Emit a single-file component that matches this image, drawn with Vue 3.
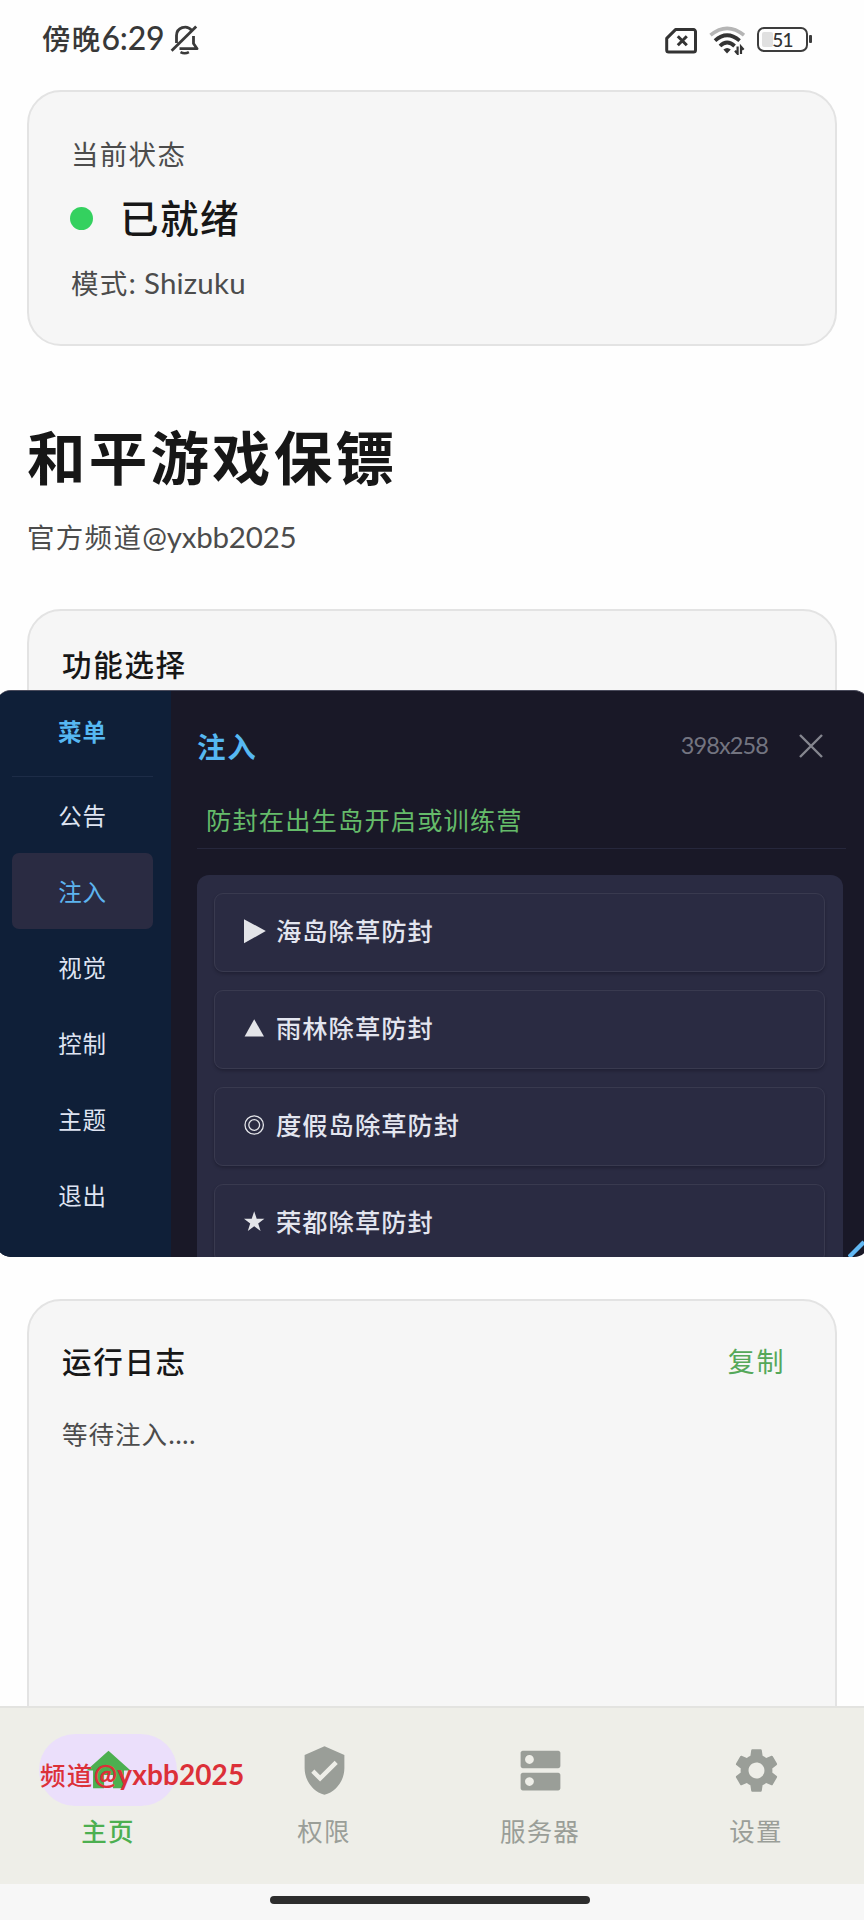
<script setup>
const menu = ['公告', '注入', '视觉', '控制', '主题', '退出']
const activeMenu = '注入'
const options = [
  { icon: 'play', label: '海岛除草防封' },
  { icon: 'triangle', label: '雨林除草防封' },
  { icon: 'rings', label: '度假岛除草防封' },
  { icon: 'star', label: '荣都除草防封' },
]
const tabs = [
  { label: '主页', active: true, path: 'M10 20v-6h4v6h5v-8h3L12 3 2 12h3v8z' },
  {
    label: '权限',
    path: 'M12 1L3 5v6c0 5.55 3.84 10.74 9 12 5.16-1.26 9-6.45 9-12V5l-9-4zm-2 16l-4-4 1.41-1.41L10 14.17l6.59-6.59L18 9l-8 8z',
  },
  {
    label: '服务器',
    path: 'M20 13H4c-.55 0-1 .45-1 1v6c0 .55.45 1 1 1h16c.55 0 1-.45 1-1v-6c0-.55-.45-1-1-1zM7 19c-1.1 0-2-.9-2-2s.9-2 2-2 2 .9 2 2-.9 2-2 2zM20 3H4c-.55 0-1 .45-1 1v6c0 .55.45 1 1 1h16c.55 0 1-.45 1-1V4c0-.55-.45-1-1-1zM7 9c-1.1 0-2-.9-2-2s.9-2 2-2 2 .9 2 2-.9 2-2 2z',
  },
  {
    label: '设置',
    path: 'M19.14 12.94c.04-.3.06-.61.06-.94 0-.32-.02-.64-.07-.94l2.03-1.58c.18-.14.23-.41.12-.61l-1.92-3.32c-.12-.22-.37-.29-.59-.22l-2.39.96c-.5-.38-1.03-.7-1.62-.94l-.36-2.54c-.04-.24-.24-.41-.48-.41h-3.84c-.24 0-.43.17-.47.41l-.36 2.54c-.59.24-1.13.57-1.62.94l-2.39-.96c-.22-.08-.47 0-.59.22L2.74 8.87c-.12.21-.08.47.12.61l2.03 1.58c-.05.3-.09.63-.09.94s.02.64.07.94l-2.03 1.58c-.18.14-.23.41-.12.61l1.92 3.32c.12.22.37.29.59.22l2.39-.96c.5.38 1.03.7 1.62.94l.36 2.54c.05.24.24.41.48.41h3.84c.24 0 .44-.17.47-.41l.36-2.54c.59-.24 1.13-.56 1.62-.94l2.39.96c.22.08.47 0 .59-.22l1.92-3.32c.12-.22.07-.47-.12-.61l-2.01-1.58zM12 15.6c-1.98 0-3.6-1.62-3.6-3.6s1.62-3.6 3.6-3.6 3.6 1.62 3.6 3.6-1.62 3.6-3.6 3.6z',
  },
]
</script>

<template>
  <div class="screen">
    <header class="status">
      <span class="clock">傍晚<span class="latin time">6:29</span></span>
      <svg class="bell" width="30" height="32" viewBox="0 0 30 32" fill="none" stroke="#3a3a3a" stroke-width="2.8">
        <path d="M6.5 19V11.5a8.5 8.5 0 0 1 15-5.3" />
        <path d="M23.5 12v7.5l3.6 5.2H9.5" stroke-linejoin="round" />
        <path d="M1.6 26.8L26.2 2.4" />
        <path d="M10.5 28.2q4.2 2.2 8.4 0" stroke-width="2.6" />
      </svg>
      <div class="indicators">
        <svg width="32" height="26" viewBox="0 0 32 26" fill="none" stroke="#333">
          <path d="M10.5 1.6H28.5a2 2 0 0 1 2 2V22a2 2 0 0 1-2 2H3.7a2 2 0 0 1-2-2V10.4z" stroke-width="3" stroke-linejoin="round" />
          <path d="M12.8 8.2l9 9M21.8 8.2l-9 9" stroke-width="3" />
        </svg>
        <svg class="wifi" width="37" height="29" viewBox="0 0 37 29" fill="none">
          <path d="M1.5 9.2Q18 -4.6 35 9.2" stroke="#b5b5b5" stroke-width="3.6" />
          <path d="M6 14.6Q18 3.8 30.6 14.6" stroke="#333" stroke-width="3.8" />
          <path d="M11 20Q18 13 25.6 20" stroke="#333" stroke-width="3.8" />
          <path d="M14.4 23.4q3.8-3 7.4 0L18 27.6z" fill="#333" />
          <path d="M28.6 20.5v7.3l-2.6-3M32 28v-7.3l2.6 3" stroke="#333" stroke-width="2.2" />
        </svg>
        <div class="battery"><span class="level"></span><span class="latin charge">51</span></div>
        <span class="nub"></span>
      </div>
    </header>

    <main class="content">
      <section class="card state">
        <div class="muted">当前状态</div>
        <div class="ready"><i class="dot"></i><span>已就绪</span></div>
        <div class="muted mode">模式<span class="latin">: Shizuku</span></div>
      </section>

      <h1 class="title">和平游戏保镖</h1>
      <div class="muted channel">官方频道<span class="latin">@yxbb2025</span></div>

      <section class="card features">
        <h2 class="heading">功能选择</h2>
      </section>

      <section class="card log">
        <div class="log-head">
          <h2 class="heading">运行日志</h2>
          <span class="copy">复制</span>
        </div>
        <div class="log-text">等待注入<span class="dots">....</span></div>
      </section>
    </main>

    <nav class="tabs">
      <div v-for="t in tabs" :key="t.label" class="tab" :class="{ active: t.active }">
        <div class="pill">
          <svg width="53" height="53" viewBox="0 0 24 24" fill="currentColor"><path :d="t.path" fill-rule="evenodd" /></svg>
        </div>
        <span class="tab-label">{{ t.label }}</span>
      </div>
    </nav>
    <div class="gesture"><i></i></div>

    <aside class="panel">
      <div class="side">
        <div class="side-title">菜单</div>
        <div v-for="m in menu" :key="m" class="side-item" :class="{ on: m === activeMenu }">{{ m }}</div>
      </div>
      <div class="body">
        <div class="body-head">
          <span class="body-title">注入</span>
          <span class="latin size">398x258</span>
          <svg width="24" height="24" viewBox="0 0 24 24" fill="none" stroke="#85868f" stroke-width="2.4"><path d="M1 1l22 22M23 1L1 23" /></svg>
        </div>
        <div class="tip">防封在出生岛开启或训练营</div>
        <div class="list">
          <div v-for="o in options" :key="o.label" class="option">
            <svg width="22" height="26" viewBox="0 0 22 26" fill="#e3e4e8">
              <path v-if="o.icon === 'play'" d="M0 1.2L21.8 13 0 25.3z" />
              <path v-else-if="o.icon === 'triangle'" d="M10.2 4.2L20 21.6H.6z" />
              <g v-else-if="o.icon === 'rings'" fill="none" stroke="#e3e4e8" stroke-width="1.3">
                <circle cx="10.2" cy="13" r="9.2" />
                <circle cx="10.2" cy="13" r="5.4" />
              </g>
              <path v-else d="M10.2 2.2l2.5 7.6H20.4l-6.2 4.6 2.4 7.6-6.4-4.7-6.4 4.7 2.4-7.6L0 9.8h7.7z" />
            </svg>
            <span>{{ o.label }}</span>
          </div>
        </div>
      </div>
      <svg class="grip" width="16" height="17" viewBox="0 0 16 17"><path d="M1 17L16 2" stroke="#62b8f3" stroke-width="4.4" /></svg>
    </aside>

    <div class="mark">频道<span class="latin">@yxbb2025</span></div>
  </div>
</template>

<style>
body {
  margin: 0;
  background: #fefefe;
}
</style>

<style scoped>
.screen {
  position: relative;
  display: flex;
  flex-direction: column;
  width: 864px;
  height: 1920px;
  overflow: hidden;
  background: #fefefe;
  color: #171717;
  font-family: "Noto Sans CJK SC", sans-serif;
  white-space: nowrap;
}
.latin {
  font-family: Lato, "Noto Sans CJK SC", sans-serif;
  line-height: 1;
  white-space: pre;
}
h1,
h2 {
  margin: 0;
}
svg {
  display: block;
  flex: none;
}

.status {
  flex: none;
  display: flex;
  align-items: flex-start;
  height: 90px;
  box-sizing: border-box;
  padding: 18px 52px 0 42px;
}
.clock {
  font-size: 28.5px;
  font-weight: 500;
  letter-spacing: 1.2px;
  line-height: 40px;
  color: #383838;
}
.time {
  font-size: 32px;
  letter-spacing: -0.2px;
}
.bell {
  margin: 6px 0 0 6px;
}
.indicators {
  display: flex;
  margin-left: auto;
  padding-top: 9px;
}
.indicators > svg:first-child {
  margin-top: 1px;
}
.wifi {
  margin: -1px 11px 0 12px;
}
.battery {
  position: relative;
  width: 51px;
  height: 25px;
  box-sizing: border-box;
  border: 2.4px solid #3d3d3d;
  border-radius: 7px;
  display: flex;
  justify-content: center;
  align-items: center;
}
.level {
  position: absolute;
  left: 3px;
  top: 3px;
  width: 11px;
  bottom: 3px;
  background: #e0e0e0;
  border-radius: 2px;
}
.charge {
  position: relative;
  font-size: 19px;
  font-weight: 500;
  letter-spacing: -0.8px;
  color: #333;
}
.nub {
  width: 3px;
  height: 8px;
  margin: 8px 0 0 1px;
  border-radius: 1px;
  background: #3d3d3d;
}

.content {
  flex: 1;
  min-height: 0;
  overflow: hidden;
  padding: 0 27px;
}
.card {
  box-sizing: border-box;
  border: 2px solid #e3e3e3;
  border-radius: 34px;
  background: #f6f6f6;
}
.muted {
  font-size: 27.5px;
  letter-spacing: 1.3px;
  line-height: 40px;
  color: #4c4c4c;
}
.muted .latin {
  font-size: 29.5px;
  letter-spacing: -0.2px;
}
.mode .latin {
  letter-spacing: 0.2px;
}
.state {
  height: 256px;
  padding: 41px 42px 0 41px;
}
.state .muted {
  padding-left: 1px;
}
.ready {
  display: flex;
  align-items: center;
  gap: 27px;
  margin: 20px 0 19px;
  font-size: 38.5px;
  font-weight: 500;
  letter-spacing: 1.5px;
  line-height: 50px;
}
.ready span {
  margin-top: -2px;
  margin-bottom: 2px;
}
.dot {
  width: 23px;
  height: 23px;
  border-radius: 50%;
  background: #34d15f;
}
.title {
  margin-top: 69px;
  font-size: 58.5px;
  font-weight: 700;
  letter-spacing: 3.2px;
  line-height: 80px;
}
.channel {
  margin-top: 21px;
}
.features {
  height: 641px;
  margin-top: 53px;
  padding: 30px 33px;
}
.heading {
  font-size: 29.5px;
  font-weight: 500;
  letter-spacing: 1.7px;
  line-height: 44px;
}
.log {
  height: 560px;
  margin-top: 49px;
  padding: 37px 50px 0 33px;
}
.log-head {
  display: flex;
  justify-content: space-between;
  align-items: center;
}
.copy {
  padding-top: 1px;
  font-size: 27px;
  letter-spacing: 1.6px;
  line-height: 43px;
  color: #55a85a;
}
.log-text {
  margin-top: 31px;
  font-size: 25.5px;
  letter-spacing: 1px;
  line-height: 40px;
  color: #4c4c4c;
}
.dots {
  letter-spacing: -0.2px;
}

.tabs {
  flex: none;
  display: flex;
  height: 178px;
  box-sizing: border-box;
  border-top: 2px solid #e3e3e0;
  padding-top: 26px;
  background: #eeeee8;
}
.tab {
  flex: 1;
  display: flex;
  flex-direction: column;
  align-items: center;
  color: #9a9e98;
}
.pill {
  display: flex;
  align-items: center;
  justify-content: center;
  width: 138px;
  height: 72px;
  border-radius: 36px;
}
.active .pill {
  background: #ebdffb;
}
.active {
  color: #4caf50;
}
.tab-label {
  margin-top: 4px;
  font-size: 25.5px;
  letter-spacing: 1.2px;
  line-height: 40px;
}
.active .tab-label {
  font-weight: 500;
}
.gesture {
  flex: none;
  height: 36px;
  display: flex;
  justify-content: center;
  background: #f7f7f7;
}
.gesture i {
  width: 320px;
  height: 8px;
  margin-top: 12px;
  margin-right: 5px;
  border-radius: 4px;
  background: #2d2d2d;
}

.panel {
  position: absolute;
  left: -4px;
  top: 690px;
  width: 873px;
  height: 567px;
  box-sizing: border-box;
  display: flex;
  overflow: hidden;
  border-top: 1px solid #4a4b5c;
  border-radius: 15px;
  background: #191827;
}
.side {
  width: 175px;
  box-sizing: border-box;
  padding: 0 18px 0 16px;
  background: #0f1f38;
}
.side-title {
  height: 86px;
  box-sizing: border-box;
  padding-top: 20px;
  border-bottom: 1px solid #1d2c47;
  font-size: 23.5px;
  font-weight: 700;
  letter-spacing: 1px;
  line-height: 40px;
  text-align: center;
  color: #56b8f2;
}
.side-item {
  height: 76px;
  border-radius: 7px;
  font-size: 23.5px;
  letter-spacing: 0.8px;
  line-height: 76px;
  text-align: center;
  color: #dfe4f2;
}
.side-item.on {
  background: #2a2b42;
  color: #5db4ef;
}
.body {
  flex: 1;
  padding: 0 26px 0 26px;
}
.body-head {
  display: flex;
  align-items: center;
  height: 111px;
  box-sizing: border-box;
  padding: 0 20px 2px 0;
}
.body-title {
  font-size: 28.5px;
  font-weight: 700;
  letter-spacing: 1.8px;
  color: #56b8f2;
}
.size {
  margin: 0 31px 0 auto;
  font-size: 23.5px;
  letter-spacing: -0.9px;
  color: #737480;
}
.tip {
  height: 46px;
  margin-right: -3px;
  padding-left: 9px;
  border-bottom: 1px solid #26273c;
  font-size: 25.3px;
  letter-spacing: 1.1px;
  line-height: 34px;
  color: #65bb6a;
}
.list {
  display: flex;
  flex-direction: column;
  gap: 18px;
  margin-top: 26px;
  padding: 18px 18px 18px 17px;
  border-radius: 12px;
  background: #2a2b42;
}
.option {
  display: flex;
  align-items: center;
  gap: 10px;
  height: 79px;
  box-sizing: border-box;
  padding: 0 0 3px 29px;
  border: 1px solid #393a4f;
  border-radius: 9px;
  font-size: 25.3px;
  font-weight: 500;
  letter-spacing: 1px;
  color: #e3e5ef;
  box-shadow: 0 2px 3px rgba(20, 20, 36, 0.4);
}
.option span {
  margin-top: -2px;
}
.grip {
  position: absolute;
  right: 5px;
  bottom: 0;
}

.mark {
  position: absolute;
  left: 40px;
  top: 1754px;
  font-size: 25.5px;
  font-weight: 500;
  letter-spacing: 1.3px;
  line-height: 40px;
  color: #dc3038;
}
.mark .latin {
  font-size: 28px;
  font-weight: 700;
  letter-spacing: 0.1px;
}
</style>
